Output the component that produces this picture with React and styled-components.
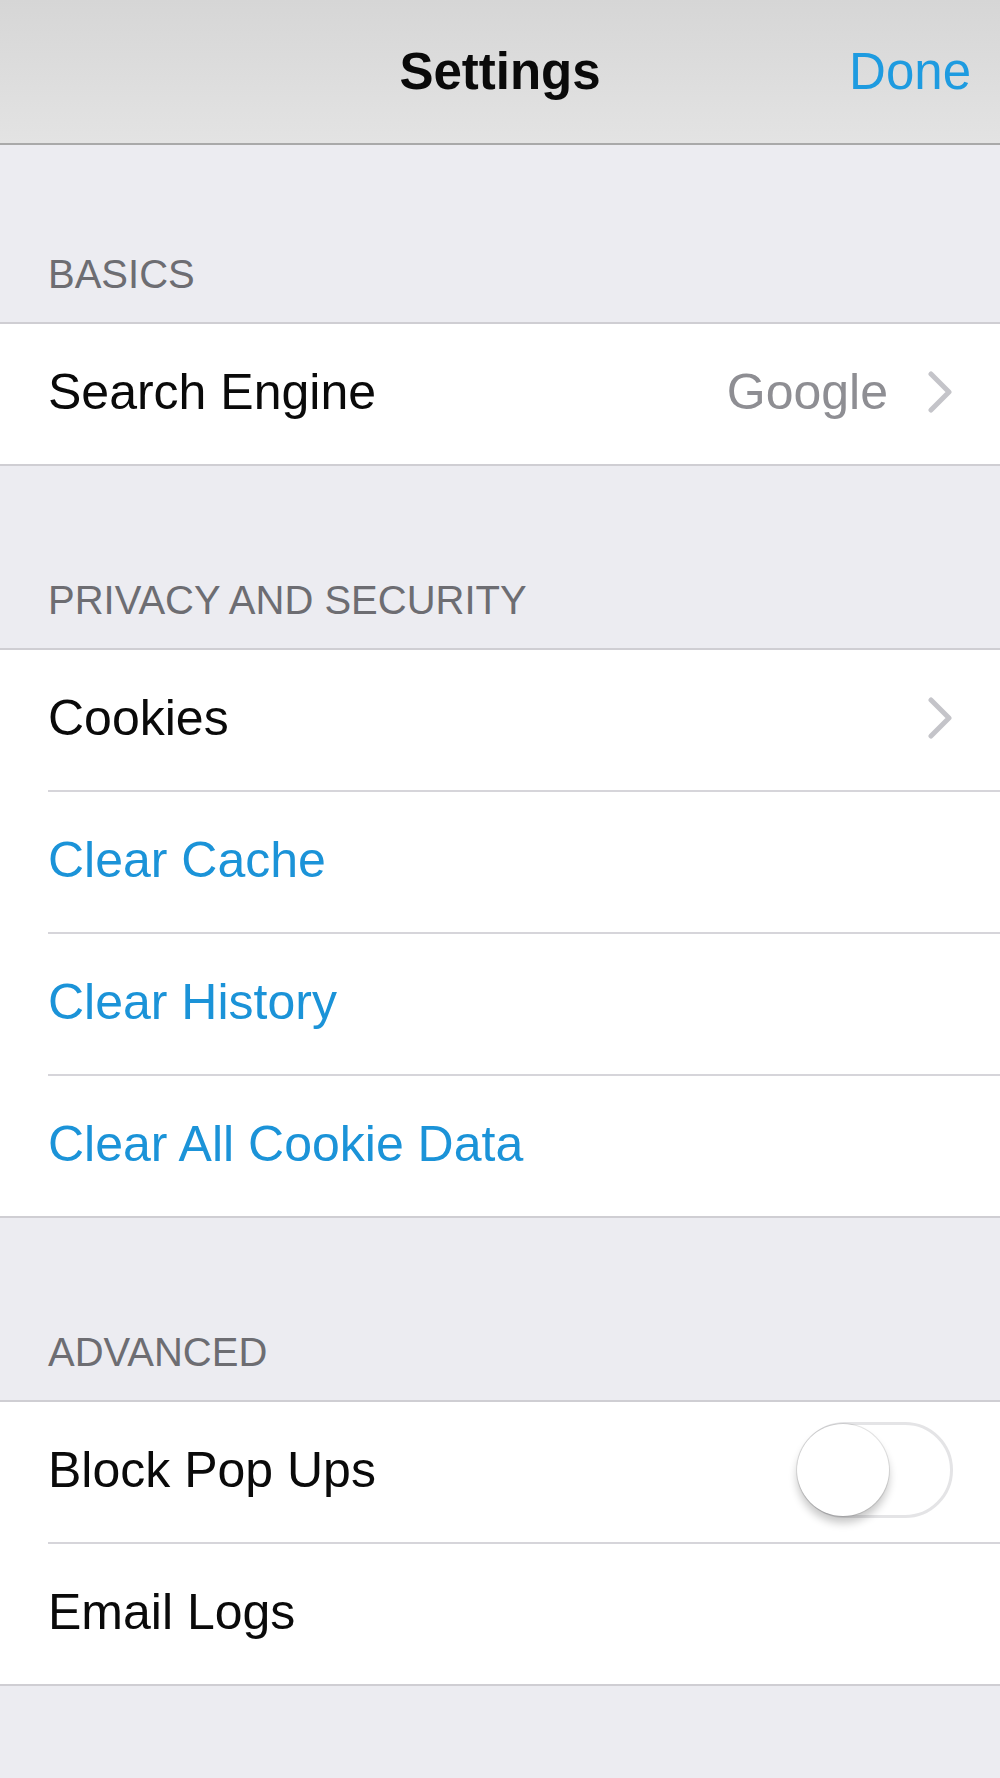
import React, { useState } from "react";
import styled, { createGlobalStyle } from "styled-components";

const GlobalStyle = createGlobalStyle`
  html, body {
    margin: 0;
    padding: 0;
    background: #ececf1;
  }
  body {
    font-family: "Liberation Sans", Arial, sans-serif;
    -webkit-font-smoothing: antialiased;
  }
`;

const Page = styled.div`
  width: 1000px;
  min-height: 1778px;
  background: #ececf1;
  display: flex;
  flex-direction: column;
`;

const NavBar = styled.header`
  height: 143px;
  display: grid;
  grid-template-columns: 1fr auto 1fr;
  align-items: center;
  background: linear-gradient(#d6d6d6, #e3e3e3);
  border-bottom: 2px solid #a9a9a9;
`;

const NavTitle = styled.h1`
  grid-column: 2;
  margin: 0;
  font-size: 51px;
  font-weight: 700;
  color: #0a0a0a;
`;

const NavButton = styled.button`
  grid-column: 3;
  justify-self: end;
  margin-right: 29px;
  padding: 0;
  border: 0;
  background: none;
  font-family: inherit;
  font-size: 51px;
  color: #1e9be0;
  cursor: pointer;
`;

const SectionHeader = styled.div`
  height: ${(p) => (p.$first ? 177 : 182)}px;
  box-sizing: border-box;
  display: flex;
  align-items: flex-end;
  padding: 0 0 28px 48px;
  font-size: 40px;
  line-height: 40px;
  color: #6d6d72;
  text-transform: uppercase;
`;

const Group = styled.ul`
  list-style: none;
  margin: 0;
  padding: 0;
  background: #fff;
  border-top: 2px solid #cfced3;
  border-bottom: 2px solid #cfced3;
`;

const Row = styled.li`
  height: 142px;
  box-sizing: border-box;
  display: flex;
  align-items: center;
  margin-left: 48px;
  padding: 0 47px 4px 0;
  border-bottom: 2px solid #d6d5da;
  cursor: pointer;

  &:last-child {
    border-bottom: 0;
    height: 140px;
  }
`;

const Label = styled.span`
  flex: 1;
  font-size: 50px;
  color: ${(p) => (p.$action ? "#1b93d8" : "#0a0a0a")};
`;

const Value = styled.span`
  font-size: 50px;
  color: #8e8e93;
  margin-right: 40px;
`;

const Chevron = styled.svg`
  width: 25px;
  height: 42px;
  flex-shrink: 0;
`;

const SwitchTrack = styled.span`
  position: relative;
  width: 156px;
  height: 96px;
  box-sizing: border-box;
  border-radius: 48px;
  border: 3px solid #e4e4e6;
  background: ${(p) => (p.$on ? "#4cd964" : "#fff")};
  transition: background 0.2s;
`;

const SwitchKnob = styled.span`
  position: absolute;
  top: -1px;
  left: ${(p) => (p.$on ? "61px" : "-3px")};
  width: 92px;
  height: 92px;
  border-radius: 50%;
  background: #fff;
  box-shadow: 0 0 0 1px rgba(0, 0, 0, 0.1), 0 7px 9px rgba(0, 0, 0, 0.22);
  transition: left 0.2s;
`;

function Disclosure() {
  return (
    <Chevron viewBox="0 0 25 42">
      <path
        d="M3 3l18 18-18 18"
        fill="none"
        stroke="#c4c4c9"
        strokeWidth="5"
        strokeLinecap="round"
        strokeLinejoin="round"
      />
    </Chevron>
  );
}

function Switch({ on, onToggle }) {
  return (
    <SwitchTrack $on={on} onClick={onToggle}>
      <SwitchKnob $on={on} />
    </SwitchTrack>
  );
}

export default function App() {
  const [blockPopUps, setBlockPopUps] = useState(false);

  return (
    <Page>
      <GlobalStyle />
      <NavBar>
        <NavTitle>Settings</NavTitle>
        <NavButton>Done</NavButton>
      </NavBar>

      <SectionHeader $first>Basics</SectionHeader>
      <Group>
        <Row>
          <Label>Search Engine</Label>
          <Value>Google</Value>
          <Disclosure />
        </Row>
      </Group>

      <SectionHeader>Privacy and Security</SectionHeader>
      <Group>
        <Row>
          <Label>Cookies</Label>
          <Disclosure />
        </Row>
        <Row>
          <Label $action>Clear Cache</Label>
        </Row>
        <Row>
          <Label $action>Clear History</Label>
        </Row>
        <Row>
          <Label $action>Clear All Cookie Data</Label>
        </Row>
      </Group>

      <SectionHeader>Advanced</SectionHeader>
      <Group>
        <Row>
          <Label>Block Pop Ups</Label>
          <Switch on={blockPopUps} onToggle={() => setBlockPopUps((v) => !v)} />
        </Row>
        <Row>
          <Label>Email Logs</Label>
        </Row>
      </Group>
    </Page>
  );
}
